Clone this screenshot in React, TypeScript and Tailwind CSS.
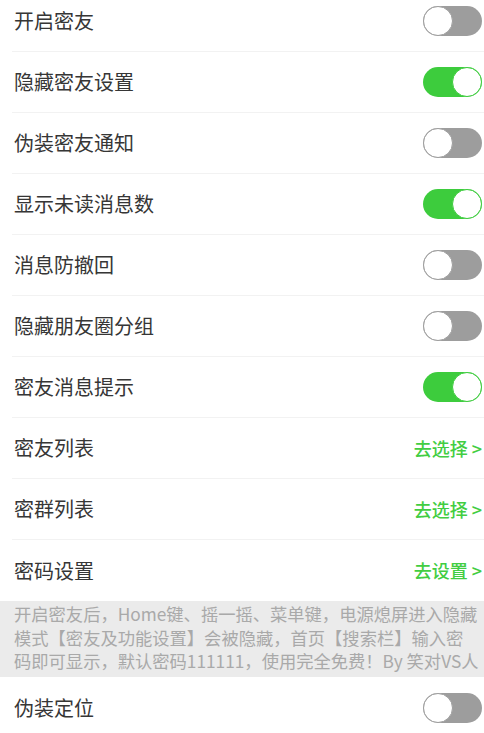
import React from 'react';

type Row =
  | { label: string; kind: 'toggle'; on: boolean }
  | { label: string; kind: 'link'; action: string };

const rows: Row[] = [
  { label: '开启密友', kind: 'toggle', on: false },
  { label: '隐藏密友设置', kind: 'toggle', on: true },
  { label: '伪装密友通知', kind: 'toggle', on: false },
  { label: '显示未读消息数', kind: 'toggle', on: true },
  { label: '消息防撤回', kind: 'toggle', on: false },
  { label: '隐藏朋友圈分组', kind: 'toggle', on: false },
  { label: '密友消息提示', kind: 'toggle', on: true },
  { label: '密友列表', kind: 'link', action: '去选择 >' },
  { label: '密群列表', kind: 'link', action: '去选择 >' },
  { label: '密码设置', kind: 'link', action: '去设置 >' },
];

const noteLines = [
  '开启密友后，Home键、摇一摇、菜单键，电源熄屏进入隐藏',
  '模式【密友及功能设置】会被隐藏，首页【搜索栏】输入密',
  '码即可显示，默认密码111111，使用完全免费！By 笑对VS人',
  '生',
];

function Toggle({ on }: { on: boolean }) {
  return (
    <div
      className={`flex h-[30px] w-[59px] rounded-full ${
        on ? 'justify-end bg-[#3dcc3d]' : 'justify-start bg-[#9d9d9d]'
      }`}
    >
      <div
        className={`h-[30px] w-[30px] rounded-full border-[1.5px] bg-white ${
          on ? 'border-[#3dcc3d]' : 'border-[#9d9d9d]'
        }`}
      />
    </div>
  );
}

function SettingRow({ row, last }: { row: Row; last?: boolean }) {
  return (
    <div className="pl-3">
      <div
        className={`flex h-[61px] items-center justify-between pl-[2px] pr-[2px] ${
          last ? '' : 'border-b border-[#f2f2f2]'
        }`}
      >
        <span className="text-[20px] text-[#363636]">{row.label}</span>
        {row.kind === 'toggle' ? (
          <Toggle on={row.on} />
        ) : (
          <span className="text-[18px] font-medium text-[#42cd42]">{row.action}</span>
        )}
      </div>
    </div>
  );
}

export default function App() {
  return (
    <div
      className="h-[733px] overflow-hidden bg-white"
      style={{ fontFamily: '"Noto Sans CJK SC", "Noto Sans", sans-serif' }}
    >
      <div className="-mt-[9px]">
        {rows.map((row, i) => (
          <SettingRow key={row.label} row={row} last={i === rows.length - 1} />
        ))}

        {/* Note */}
        <div className="h-[76px] overflow-hidden bg-[#ebebeb] pl-[14px] pt-[1px] text-[17.3px] leading-[23.5px] text-[#a9a9a9]">
          {noteLines.map((line) => (
            <div key={line} className="whitespace-nowrap">
              {line}
            </div>
          ))}
        </div>

        <SettingRow row={{ label: '伪装定位', kind: 'toggle', on: false }} last />
      </div>
    </div>
  );
}
